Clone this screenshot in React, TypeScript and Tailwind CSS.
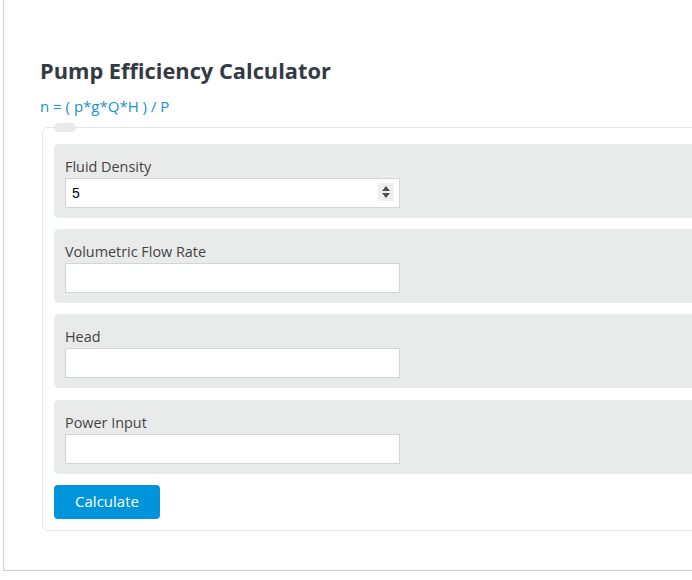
import React from 'react';

const fields = [
  { label: 'Fluid Density', value: '5', spinner: true },
  { label: 'Volumetric Flow Rate', value: '' },
  { label: 'Head', value: '' },
  { label: 'Power Input', value: '' },
];

function Spinner() {
  return (
    <div className="absolute right-[6px] top-[5px] w-[16px] h-[18px] bg-[#efefef] flex flex-col items-center justify-center gap-[2px]">
      <svg width="8" height="5" viewBox="0 0 8 5"><path d="M4 0 L8 5 L0 5 Z" fill="#505050" /></svg>
      <svg width="8" height="5" viewBox="0 0 8 5"><path d="M0 0 L8 0 L4 5 Z" fill="#505050" /></svg>
    </div>
  );
}

export default function App() {
  return (
    <div className="bg-white min-h-[580px] font-['Open_Sans',sans-serif]">
      <div className="ml-[3px] w-[760px] h-[571px] border-l border-b border-[#cfcfcf] pt-[56px] pl-[36px]">
        <h1 className="text-[21.8px] leading-[30px] font-bold text-[#333a44]">Pump Efficiency Calculator</h1>
        <p className="mt-[10px] text-[15px] leading-[20px] text-[#1a8fd4]">n = ( p*g*Q*H ) / P</p>

        <div className="relative mt-[11px] ml-[2px] w-[700px] border border-[#e6e6e6] rounded-[6px] px-[11px] pt-[16px] pb-[11px]">
          <div className="absolute left-[11px] top-[-5px] w-[22px] h-[9px] rounded-full bg-[#e9eaea]" />
          <div className="flex flex-col gap-[11.2px]">
            {fields.map((f) => (
              <div key={f.label} className="bg-[#e9eaea] rounded-[5px] px-[11px] pt-[13px] pb-[10px]">
                <label className="block text-[14.4px] leading-[20px] text-[#444]">{f.label}</label>
                <div className="relative mt-[1px] w-[335px]">
                  <input
                    type="text"
                    defaultValue={f.value}
                    className="block w-[335px] h-[30px] bg-white border border-[#d4d4d4] px-[6px] text-[14px] text-black font-['Liberation_Sans',Arial,sans-serif] outline-none"
                  />
                  {f.spinner && <Spinner />}
                </div>
              </div>
            ))}
          </div>
          <button className="mt-[11px] w-[106px] h-[34px] rounded-[4px] bg-[#0095da] text-white text-[15px]">
            Calculate
          </button>
        </div>
      </div>
    </div>
  );
}
